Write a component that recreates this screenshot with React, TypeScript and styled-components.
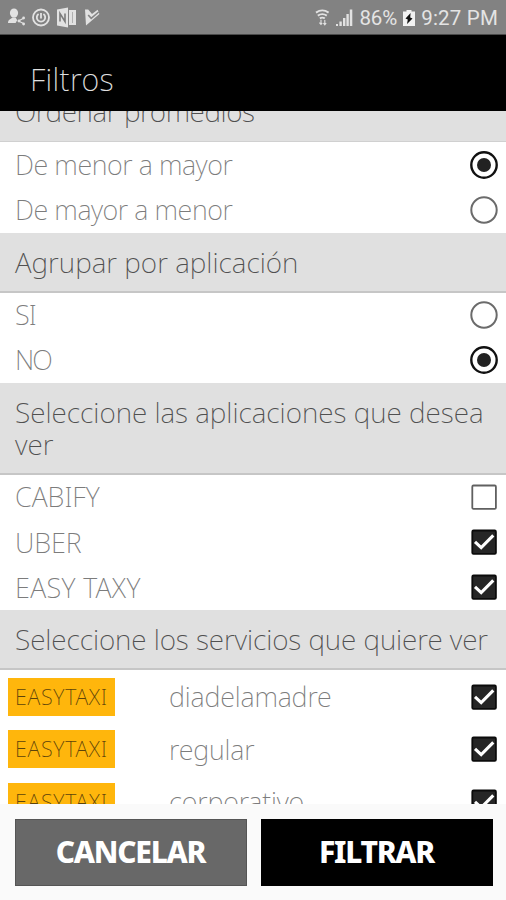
import React from 'react';
import styled, { createGlobalStyle } from 'styled-components';

const Global = createGlobalStyle`
  * { box-sizing: border-box; }
  body { margin: 0; background: #fff; }
`;

const Screen = styled.div`
  width: 506px;
  height: 900px;
  display: flex;
  flex-direction: column;
  overflow: hidden;
  background: #fff;
  font-family: 'Noto Sans', sans-serif;
  font-weight: 200;
`;

const StatusBar = styled.div`
  flex: none;
  height: 35px;
  display: flex;
  justify-content: space-between;
  align-items: center;
  padding: 2px 8px 0 7px;
  background: #828282;
  border-bottom: 1px solid #4a4a4a;
  color: #e4e4e4;
  font: 400 20.5px/32px Roboto, sans-serif;
`;

const StatusGroup = styled.div<{ $gap: number }>`
  display: flex;
  align-items: center;
  gap: ${(p) => p.$gap}px;
`;

const StatusText = styled.span<{ $track?: number }>`
  white-space: nowrap;
  letter-spacing: ${(p) => p.$track ?? 0}px;
`;

const TitleBar = styled.header`
  flex: none;
  height: 76px;
  padding: 24px 0 0 30px;
  background: #000;
`;

const Title = styled.h1`
  margin: 0;
  color: #e0e0e0;
  font-size: 30.5px;
  font-weight: 250;
  line-height: 40px;
  letter-spacing: 0.4px;
`;

const List = styled.main`
  flex: 1;
  min-height: 0;
  overflow: hidden;
`;

const Section = styled.section`
  &:first-child { margin-top: -28.5px; }
`;

const SectionTitle = styled.h2<{ $track: number }>`
  margin: 0;
  padding: 12.9px 0 13.1px 15px;
  background: #e0e0e0;
  border-bottom: 2px solid #c6c6c6;
  color: #505050;
  font-size: 28px;
  font-weight: 200;
  line-height: 32px;
  white-space: pre-line;
  letter-spacing: ${(p) => p.$track}px;

  ${Section}:first-child & {
    padding-bottom: 14.1px;
    border-bottom: 1px solid #d0d0d0;
  }
`;

const Row = styled.label<{ $tall?: boolean }>`
  height: ${(p) => (p.$tall ? 52.7 : 45.12)}px;
  display: flex;
  align-items: center;
  padding: ${(p) => (p.$tall ? '0 8px 0 8px' : '0 8px 1px 15px')};
`;

const Label = styled.span<{ $track: number }>`
  flex: 1;
  color: #7c7c7c;
  font-size: 27px;
  line-height: 43px;
  white-space: nowrap;
  letter-spacing: ${(p) => p.$track}px;
`;

const Chip = styled.span`
  width: 107px;
  height: 38px;
  margin-right: 54px;
  padding-left: 7px;
  background: #ffb60c;
  color: #5c430a;
  font-size: 21.5px;
  line-height: 38px;
  letter-spacing: 0.7px;
`;

const Control = styled.svg`
  flex: none;
  width: 28px;
  height: 28px;
`;

const Footer = styled.footer`
  flex: none;
  height: 96px;
  display: flex;
  gap: 14px;
  padding: 15px 13.5px 14px 14.5px;
  background: #fafafa;
`;

const Button = styled.button<{ $dark?: boolean }>`
  flex: 1;
  padding: 0 0 1px;
  border: 1px solid ${(p) => (p.$dark ? '#000' : '#555')};
  background: ${(p) => (p.$dark ? '#000' : '#686868')};
  color: #fff;
  font: 800 30px/62px 'Noto Sans', sans-serif;
  letter-spacing: -1.25px;
`;

const Radio = ({ on }: { on?: boolean }) => (
  <Control viewBox="0 0 28 28">
    <circle cx="14" cy="14" r="12.7" fill="none" stroke={on ? '#111' : '#6b6b6b'} strokeWidth={on ? 2.4 : 2} />
    {on && <circle cx="14" cy="14" r="7" fill="#222" />}
  </Control>
);

const Checkbox = ({ on }: { on?: boolean }) => (
  <Control viewBox="0 0 28 28">
    <rect x="2.3" y="2.5" width="23.6" height="23.4" rx="1.2" fill={on ? '#262626' : '#fff'} stroke={on ? '#0b0b0b' : '#606060'} strokeWidth="1.8" />
    {on && <path d="M5 13.8 11.2 19.6 23.3 7.4" fill="none" stroke="#fff" strokeWidth="3.1" />}
  </Control>
);

const LeftIcons = () => (
  <svg width="96" height="24" viewBox="0 0 96 24" fill="#e2e2e2">
    <ellipse cx="7" cy="7" rx="4.1" ry="4.6" />
    <path d="M1 17c0-4 3-3.6 4.4-5.5h3.2l1.6 2.8L8.6 17z" />
    <path d="m17 12-5.5 3 5.5 2.8" fill="none" stroke="#e2e2e2" strokeWidth="1.1" />
    <circle cx="16.6" cy="12" r="1.4" /><circle cx="12" cy="15" r="1.4" /><circle cx="16.6" cy="18" r="1.4" />
    <g fill="none" stroke="#e2e2e2" strokeWidth="1.8">
      <circle cx="34" cy="11.5" r="8" />
      <path d="M31.6 8a4.2 4.2 0 1 0 4.8 0M34 7v5.5" />
    </g>
    <path d="m50 3.5 11-2v20l-11-2z" />
    <path d="M62 4h7v15h-7z" />
    <path d="M65.5 6v11" stroke="#b0b0b0" strokeWidth="1" />
    <path d="M53 15.5v-8l5 8v-8" fill="none" stroke="#7c7c7c" strokeWidth="1.6" />
    <path d="M78 3.5h3.2L85 8l5.6-4.2L92.4 8 79 19.5z" />
    <path d="m81.2 9 3 3.4L91.6 6" fill="none" stroke="#858585" strokeWidth="1.6" />
  </svg>
);

const Wifi = () => (
  <svg width="15" height="20" viewBox="0 0 15 20" fill="none" stroke="#e2e2e2" strokeWidth="1.9">
    <path d="M1 4.6q6.3-4.4 12.6 0M2.8 7.6q4.5-3 9 0M4.8 10.4q2.5-1.6 5 0" />
    <path d="M6 11.8v4.2M4.4 14.6 6 16.4l1.3-1.4M9.8 12v4.4M8.4 15l1.4 1.8 1.4-1.8" strokeWidth="1.1" />
  </svg>
);

const Signal = () => (
  <svg width="17" height="20" viewBox="0 0 17 20" fill="#e2e2e2">
    <path d="M0 16h2v2H0zM3.4 13.5h2.4V18H3.4zM7 10h2.4v8H7zM10.4 6h2.4v12h-2.4zM13.8 1.5h2.5V18h-2.5z" />
  </svg>
);

const Battery = () => (
  <svg width="12" height="16" viewBox="0 0 12 16">
    <path d="M3.5 0h5v1.6H12V16H0V1.6h3.5z" fill="#f2f2f2" />
    <path d="M7.6 3 2.5 8.5l2.3 1L4 14l5.5-5.6-2.3-1z" fill="#111" />
  </svg>
);

const services = ['diadelamadre', 'regular', 'corporativo'];

const App = () => (
  <>
    <Global />
    <Screen>
      <StatusBar>
        <LeftIcons />
        <StatusGroup $gap={6}>
          <StatusGroup $gap={6}><Wifi /><Signal /></StatusGroup>
          <StatusText $track={-0.1}>86%</StatusText>
          <Battery />
          <StatusText $track={0.2}>9:27 PM</StatusText>
        </StatusGroup>
      </StatusBar>
      <TitleBar><Title>Filtros</Title></TitleBar>
      <List>
        <Section>
          <SectionTitle $track={-0.4}>Ordenar promedios</SectionTitle>
          <Row><Label $track={-0.43}>De menor a mayor</Label><Radio on /></Row>
          <Row><Label $track={-0.43}>De mayor a menor</Label><Radio /></Row>
        </Section>
        <Section>
          <SectionTitle $track={0.02}>Agrupar por aplicación</SectionTitle>
          <Row><Label $track={-1}>SI</Label><Radio /></Row>
          <Row><Label $track={-2}>NO</Label><Radio on /></Row>
        </Section>
        <Section>
          <SectionTitle $track={-0.01}>{'Seleccione las aplicaciones que desea\nver'}</SectionTitle>
          <Row><Label $track={0}>CABIFY</Label><Checkbox /></Row>
          <Row><Label $track={-0.1}>UBER</Label><Checkbox on /></Row>
          <Row><Label $track={0.35}>EASY TAXY</Label><Checkbox on /></Row>
        </Section>
        <Section>
          <SectionTitle $track={-0.08}>Seleccione los servicios que quiere ver</SectionTitle>
          {services.map((name) => (
            <Row $tall key={name}>
              <Chip>EASYTAXI</Chip>
              <Label $track={-0.15}>{name}</Label>
              <Checkbox on />
            </Row>
          ))}
        </Section>
      </List>
      <Footer>
        <Button>CANCELAR</Button>
        <Button $dark>FILTRAR</Button>
      </Footer>
    </Screen>
  </>
);

export default App;
